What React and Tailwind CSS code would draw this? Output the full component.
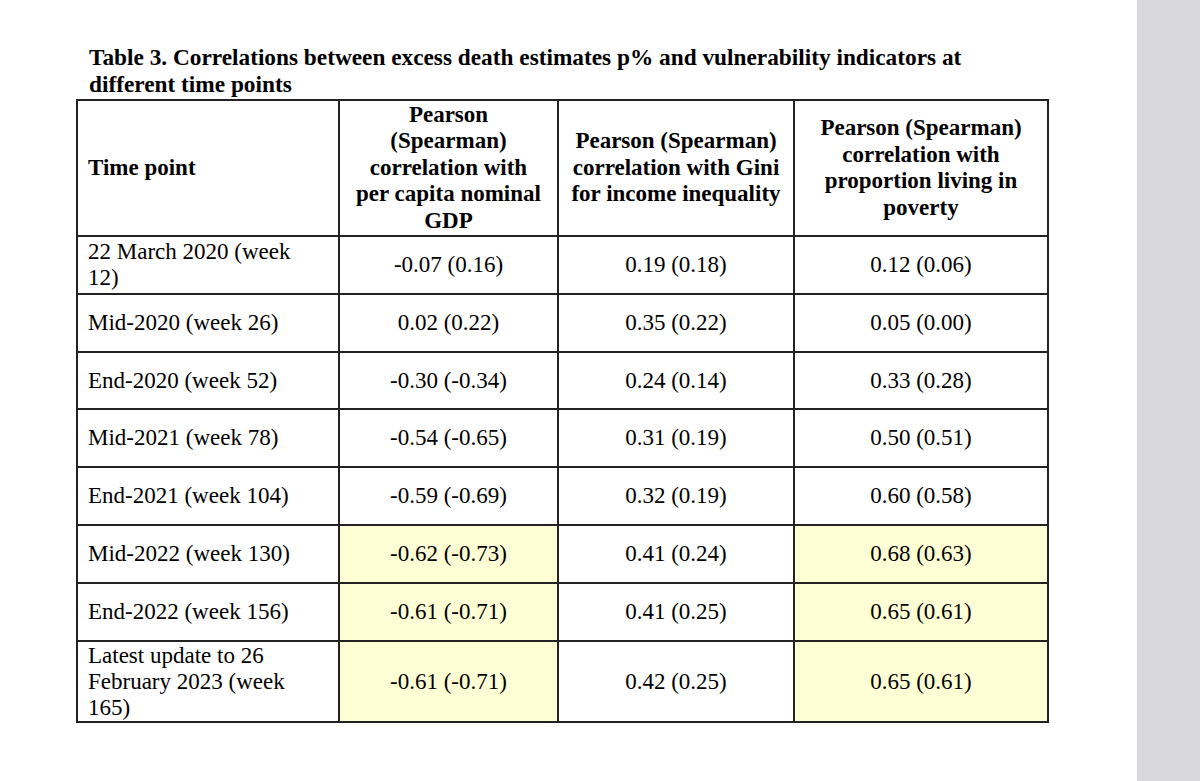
const ROWS = [
  { t: "22 March 2020 (week 12)", a: "-0.07 (0.16)", b: "0.19 (0.18)", c: "0.12 (0.06)", h: "h-[58px]" },
  { t: "Mid-2020 (week 26)", a: "0.02 (0.22)", b: "0.35 (0.22)", c: "0.05 (0.00)", h: "h-[58px]" },
  { t: "End-2020 (week 52)", a: "-0.30 (-0.34)", b: "0.24 (0.14)", c: "0.33 (0.28)", h: "h-[57px]" },
  { t: "Mid-2021 (week 78)", a: "-0.54 (-0.65)", b: "0.31 (0.19)", c: "0.50 (0.51)", h: "h-[58px]" },
  { t: "End-2021 (week 104)", a: "-0.59 (-0.69)", b: "0.32 (0.19)", c: "0.60 (0.58)", h: "h-[58px]" },
  { t: "Mid-2022 (week 130)", a: "-0.62 (-0.73)", b: "0.41 (0.24)", c: "0.68 (0.63)", h: "h-[58px]", hl: true },
  { t: "End-2022 (week 156)", a: "-0.61 (-0.71)", b: "0.41 (0.25)", c: "0.65 (0.61)", h: "h-[58px]", hl: true },
  { t: "Latest update to 26 February 2023 (week 165)", a: "-0.61 (-0.71)", b: "0.42 (0.25)", c: "0.65 (0.61)", h: "h-[81px]", hl: true },
];

const cell = "border-2 border-[#222] align-middle";

export default function App() {
  return (
    <div className="flex w-[1200px] h-[781px] bg-white font-['Liberation_Serif',serif] text-black">
      <div className="flex-1 pt-[44px]">
        <div className="ml-[89px] w-[960px] text-[23.3px] leading-[27px] font-bold">
          Table 3. Correlations between excess death estimates p% and vulnerability indicators at different time points
        </div>
        <table className="ml-[76px] mt-px border-collapse table-fixed w-[971px] text-[23px] leading-[26px]">
          <colgroup>
            <col className="w-[262px]" />
            <col className="w-[219px]" />
            <col className="w-[236px]" />
            <col className="w-[254px]" />
          </colgroup>
          <thead>
            <tr className="h-[136px] font-bold leading-[26.5px]">
              <th className={`${cell} text-left pl-[10px]`}>Time point</th>
              <th className={`${cell} text-center px-[12px]`}>Pearson (Spearman) correlation with per capita nominal GDP</th>
              <th className={`${cell} text-center px-[8px]`}>Pearson (Spearman) correlation with Gini for income inequality</th>
              <th className={`${cell} text-center px-3`}>Pearson (Spearman) correlation with proportion living in poverty</th>
            </tr>
          </thead>
          <tbody>
            {ROWS.map((r) => (
              <tr key={r.t} className={r.h}>
                <td className={`${cell} pl-[10px] pr-4`}>{r.t}</td>
                <td className={`${cell} text-center ${r.hl ? "bg-[#ffffd6]" : ""}`}>{r.a}</td>
                <td className={`${cell} text-center`}>{r.b}</td>
                <td className={`${cell} text-center ${r.hl ? "bg-[#ffffd6]" : ""}`}>{r.c}</td>
              </tr>
            ))}
          </tbody>
        </table>
      </div>
      <div className="w-[63px] h-full bg-[#d9d8dd]" />
    </div>
  );
}
